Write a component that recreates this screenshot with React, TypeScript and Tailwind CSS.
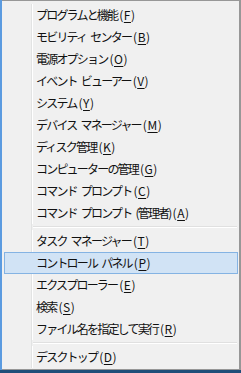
import React from "react";

type Item = { label: string; key: string; active?: boolean } | { sep: true };

const items: Item[] = [
  { label: "プログラムと機能", key: "F" },
  { label: "モビリティ センター", key: "B" },
  { label: "電源オプション", key: "O" },
  { label: "イベント ビューアー", key: "V" },
  { label: "システム", key: "Y" },
  { label: "デバイス マネージャー", key: "M" },
  { label: "ディスク管理", key: "K" },
  { label: "コンピューターの管理", key: "G" },
  { label: "コマンド プロンプト", key: "C" },
  { label: "コマンド プロンプト (管理者)", key: "A" },
  { sep: true },
  { label: "タスク マネージャー", key: "T" },
  { label: "コントロール パネル", key: "P", active: true },
  { label: "エクスプローラー", key: "E" },
  { label: "検索", key: "S" },
  { label: "ファイル名を指定して実行", key: "R" },
  { sep: true },
  { label: "デスクトップ", key: "D" },
];

const font = {
  fontFamily: '"Noto Sans CJK JP", "Noto Sans", sans-serif',
};

function Label({ label, k }: { label: string; k: string }) {
  const parts = label.split(" ");
  return (
    <span className="text-[12px] leading-none text-[#111] whitespace-nowrap flex items-center" style={font}>
      {parts.map((p, i) => (
        <React.Fragment key={i}>
          {i > 0 && <span className="inline-block w-[4px]" />}
          <span className="tracking-[-1.8px]">{p}</span>
        </React.Fragment>
      ))}
      <span className="ml-[2px] tracking-[0.5px]">
        (<span className="underline underline-offset-2 decoration-1">{k}</span>)
      </span>
    </span>
  );
}

export default function App() {
  return (
    <div className="w-[241px] h-[373px] flex flex-col bg-[#1f4e79] overflow-hidden">
      <div className="flex h-[370px]">
        <div className="w-[2px] bg-[#5b9be0]" />
        <div className="w-[239px] h-[370px] bg-[#f0f0f0] border-t border-b border-r-2 border-[#979797] pt-[3px] pb-[1px] flex flex-col">
          {items.map((it, i) => {
            if ("sep" in it) {
              return (
                <div key={i} className="flex h-[6px] ml-[2px] mr-[1px]">
                  <div className="w-[27px]" />
                  <div className="flex-1 border-l border-[#e2e3e3] pl-[1px] flex items-start pt-[2px]">
                    <div className="flex-1 h-[2px] border-t border-b border-t-[#e0e0e0] border-b-white mr-[1px] bg-[#f0f0f0]" />
                  </div>
                </div>
              );
            }
            if (it.active) {
              return (
                <div key={i} className="flex items-center h-[22px] ml-[2px] mr-[1px] border border-[#84b3e3] bg-[#d1e3f5] pl-[31px]">
                  <Label label={it.label} k={it.key} />
                </div>
              );
            }
            return (
              <div key={i} className="flex h-[22px] ml-[2px] mr-[1px]">
                <div className="w-[27px]" />
                <div className="flex-1 flex items-center border-l border-[#e2e3e3] shadow-[inset_1px_0_0_#ffffff] pl-[4px]">
                  <Label label={it.label} k={it.key} />
                </div>
              </div>
            );
          })}
        </div>
      </div>
    </div>
  );
}
